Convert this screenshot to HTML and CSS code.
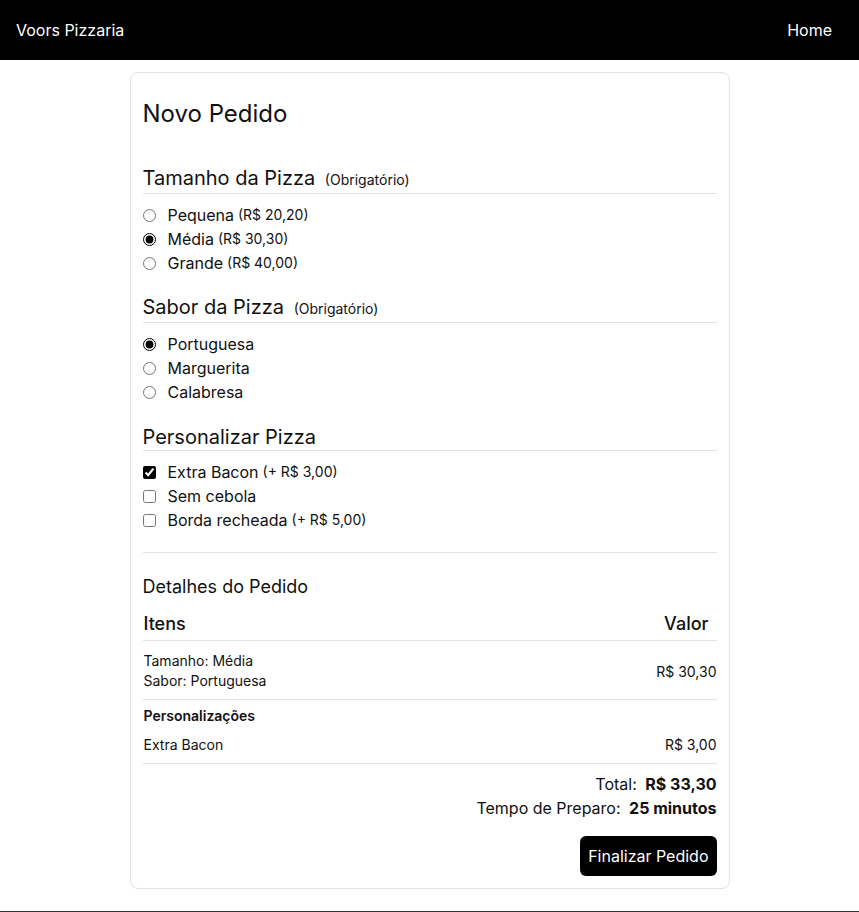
FILE: index.html
```html
<!DOCTYPE html>
<html lang="pt-BR">
<head>
<meta charset="utf-8">
<title>Voors Pizzaria</title>
<link rel="stylesheet" href="styles.css">
</head>
<body>
<header class="topbar">
  <span class="brand">Voors Pizzaria</span>
  <a class="nav-link" href="#">Home</a>
</header>
<main class="page">
  <form class="card">
    <h1 class="title">Novo Pedido</h1>

    <section class="group">
      <h2 class="group-title">Tamanho da Pizza <small>(Obrigatório)</small></h2>
      <label class="opt"><input type="radio" name="size"> Pequena <small>(R$ 20,20)</small></label>
      <label class="opt"><input type="radio" name="size" checked> Média <small>(R$ 30,30)</small></label>
      <label class="opt"><input type="radio" name="size"> Grande <small>(R$ 40,00)</small></label>
    </section>

    <section class="group">
      <h2 class="group-title">Sabor da Pizza <small>(Obrigatório)</small></h2>
      <label class="opt"><input type="radio" name="flavor" checked> Portuguesa</label>
      <label class="opt"><input type="radio" name="flavor"> Marguerita</label>
      <label class="opt"><input type="radio" name="flavor"> Calabresa</label>
    </section>

    <section class="group group-last">
      <h2 class="group-title">Personalizar Pizza</h2>
      <label class="opt"><input type="checkbox" checked> Extra Bacon <small>(+ R$ 3,00)</small></label>
      <label class="opt"><input type="checkbox"> Sem cebola</label>
      <label class="opt"><input type="checkbox"> Borda recheada <small>(+ R$ 5,00)</small></label>
    </section>

    <hr class="sep">

    <h3 class="details-title">Detalhes do Pedido</h3>
    <div class="table">
      <div class="row head"><span>Itens</span><span class="valor">Valor</span></div>
      <div class="row item">
        <div class="lines"><span>Tamanho: Média</span><span>Sabor: Portuguesa</span></div>
        <span>R$ 30,30</span>
      </div>
      <div class="row custom">
        <div class="custom-col">
          <strong class="custom-title">Personalizações</strong>
          <div class="custom-line"><span>Extra Bacon</span><span>R$ 3,00</span></div>
        </div>
      </div>
    </div>

    <div class="totals">
      <p>Total: <b>R$ 33,30</b></p>
      <p>Tempo de Preparo: <b>25 minutos</b></p>
    </div>
    <div class="actions">
      <button type="button" class="btn">Finalizar Pedido</button>
    </div>
  </form>
</main>
<footer class="footer"></footer>
</body>
</html>
```

FILE: styles.css
```css
* { box-sizing: border-box; }
html, body { margin: 0; padding: 0; }
body {
  font-family: Inter, "Noto Sans", sans-serif;
  color: #111;
  background: #fff;
}
.topbar {
  height: 60px;
  background: #000;
  color: #fff;
  display: flex;
  align-items: center;
  justify-content: space-between;
  padding: 0 27px 0 16px;
  font-size: 16px;
}
.nav-link { color: #fff; text-decoration: none; }
.page {
  display: flex;
  justify-content: center;
  padding: 12px 0 22px;
}
.card {
  width: 600px;
  border: 1px solid #e3e3e3;
  border-radius: 8px;
  padding: 26px 12px 12px;
}
.title {
  font-size: 24px;
  font-weight: 400;
  margin: 0 0 36px;
  line-height: 30px;
}
.group { margin-bottom: 19px; }
.group-last { margin-top: 20px; margin-bottom: 20px; }
.group-title {
  font-size: 20px;
  font-weight: 400;
  margin: 0 0 9px;
  padding: 0;
  border-bottom: 1px solid #e3e3e3;
  line-height: 26px;
}
.group-title small { font-size: 14px; margin-left: 4px; }
.opt {
  display: flex;
  align-items: center;
  font-size: 16px;
  line-height: 24px;
  height: 24px;
}
.opt small { font-size: 14px; margin-left: 4px; }
.opt input {
  margin: 0 12px 0 0;
  width: 13px;
  height: 13px;
  accent-color: #000;
}
.sep {
  border: 0;
  border-top: 1px solid #e3e3e3;
  margin: 0 0 20px;
}
.details-title {
  font-size: 18px;
  font-weight: 400;
  margin: 0 0 11px;
  line-height: 28px;
}
.row {
  display: flex;
  justify-content: space-between;
  border-bottom: 1px solid #e3e3e3;
}
.head {
  font-size: 18px;
  font-weight: 500;
  padding: 0 8px 4px 1px;
  line-height: 24px;
}
.item {
  align-items: center;
  font-size: 14px;
  padding: 10px 0 8px 1px;
}
.lines { display: flex; flex-direction: column; line-height: 20px; }
.custom { padding: 7px 0 8px 1px; }
.custom-col { width: 100%; }
.custom-title {
  display: block;
  font-size: 14px;
  font-weight: 600;
  line-height: 18px;
  margin-bottom: 10px;
}
.custom-line {
  display: flex;
  justify-content: space-between;
  font-size: 14px;
  line-height: 20px;
}
.totals {
  margin-top: 8px;
  text-align: right;
  font-size: 16px;
  line-height: 24px;
}
.totals p { margin: 0; }
.totals b { margin-left: 4px; font-weight: 700; }
.actions {
  display: flex;
  justify-content: flex-end;
  margin-top: 16px;
}
.btn {
  background: #000;
  color: #fff;
  border: 0;
  border-radius: 6px;
  height: 40px;
  padding: 0 8px;
  font-family: Inter, sans-serif;
  font-size: 16px;
}
.footer {
  height: 40px;
  background: #333;
}
```
